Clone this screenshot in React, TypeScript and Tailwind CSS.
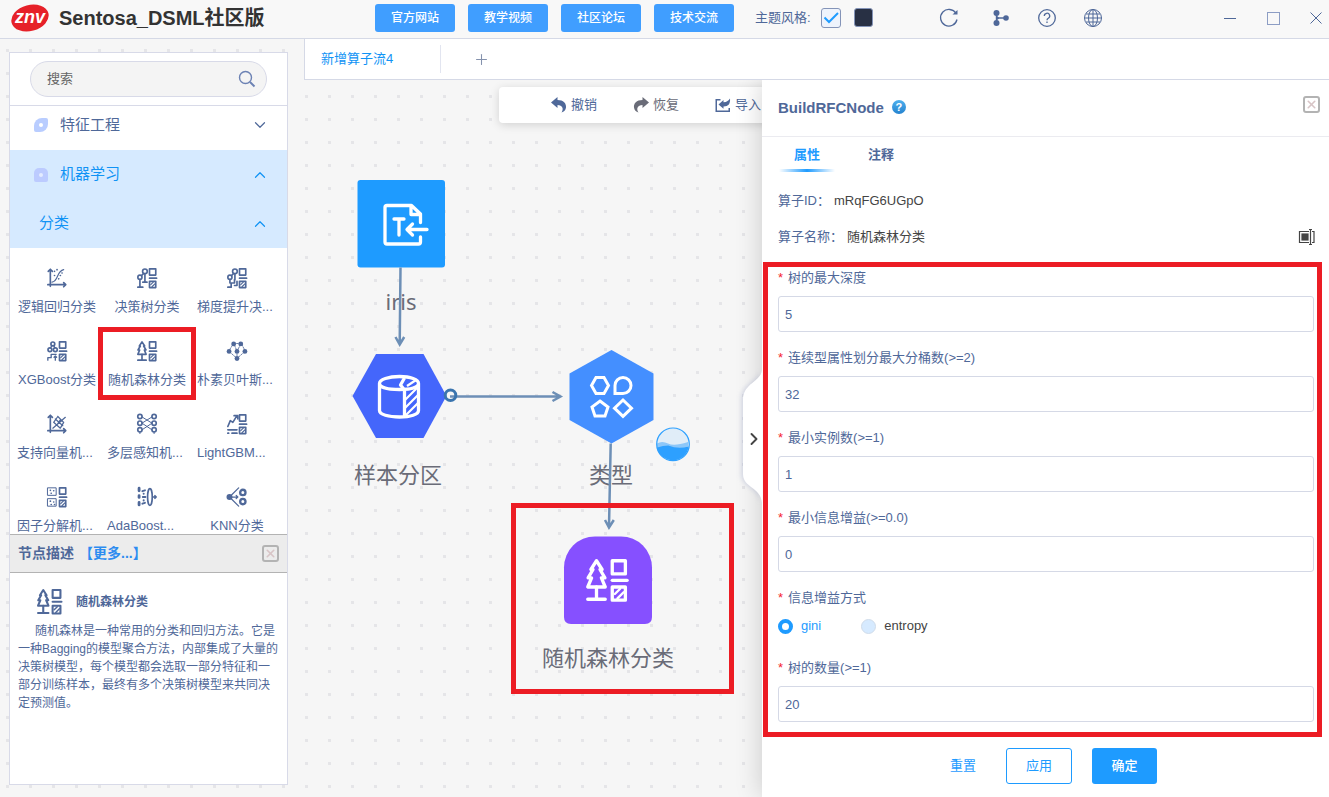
import { useState } from 'react';
import type { ReactNode } from 'react';
import { ChevronDown, ChevronRight, ChevronUp, Plus, X } from 'lucide-react';

const LINKS = ['官方网站', '教学视频', '社区论坛', '技术交流'];

// square + bar + hatched square, shared by most classifier icons
const Leaf = () => (
  <>
    <rect x="15" y="1" width="7.500" height="7.500" />
    <path d="M15 12.200h8.500" />
    <rect x="15" y="16" width="7.500" height="7.500" />
    <path d="M16.500 20l3-3M18 22.500l3.500-3.500" strokeWidth="1.4" />
  </>
);

const Forest = () => (
  <>
    <path d="M6 1L2.800 6H4L1.200 10.800H3.200L1 16H11L8.800 10.800H10.800L8 6H9.200Z" />
    <path d="M6 16v7M1 23h10" />
    <Leaf />
  </>
);

const Axes = () => <path d="M4 2v20M1 20h21M1.500 4L4 1.500L6.500 4M20 17.500L22.500 20L20 22.500" />;

const Icon = ({ children, className }: { children: ReactNode; className: string }) => (
  <svg
    viewBox="0 0 24 24"
    className={`overflow-visible ${className}`}
    fill="none"
    stroke="currentColor"
    strokeWidth="2"
    strokeLinejoin="round"
    strokeLinecap="round"
  >
    {children}
  </svg>
);

const OPERATORS: { name: string; marked?: boolean; icon: ReactNode }[] = [
  {
    name: '逻辑回归分类',
    icon: (
      <>
        <Axes />
        <path d="M6 17C14 16 11 4 20 2" strokeWidth="1.5" />
        <path d="M9 4h.1M9 9h.1M12 2h.1M16 9h.1M14 13h.1M18 6h.1" />
      </>
    ),
  },
  {
    name: '决策树分类',
    icon: (
      <>
        <circle cx="9.500" cy="4" r="2.800" />
        <circle cx="3.500" cy="11" r="2.500" />
        <path d="M3.500 14v9M1 23h6M9.500 7v10M7 17h5M5.500 9l2-2" />
        <Leaf />
      </>
    ),
  },
  {
    name: '梯度提升决...',
    icon: (
      <>
        <circle cx="9.500" cy="4" r="2.800" />
        <circle cx="3.500" cy="11" r="2.500" />
        <path d="M3.500 14v4M1 23h4v-5h4v-4M9.500 7v7M9 21h3v-5M5.500 9l2-2" />
        <Leaf />
      </>
    ),
  },
  {
    name: 'XGBoost分类',
    icon: (
      <>
        <circle cx="7" cy="3.500" r="2.300" />
        <circle cx="3.500" cy="10.500" r="2.300" />
        <circle cx="10" cy="10.500" r="2.300" />
        <path d="M5.800 5.500L4.500 8M8 5.500L9.300 8M1 23v-3h4v-4h6M10 23v-5M8.500 19.500l1.500-1.500l1.500 1.500" strokeWidth="1.600" />
        <Leaf />
      </>
    ),
  },
  { name: '随机森林分类', marked: true, icon: <Forest /> },
  {
    name: '朴素贝叶斯...',
    icon: (
      <>
        <path d="M8 3h9L22 12L12 21L2 12L8 3l4 9L17 3M12 12v9" strokeWidth="1" strokeDasharray="2 1.5" />
        <g fill="currentColor" stroke="none">
          <circle cx="8" cy="3.500" r="2.900" />
          <circle cx="16.500" cy="3.500" r="2.900" />
          <circle cx="2.500" cy="12.500" r="2.900" />
          <circle cx="12" cy="12.500" r="2.900" />
          <circle cx="21.500" cy="12.500" r="2.900" />
          <circle cx="12" cy="21" r="2.900" />
        </g>
      </>
    ),
  },
  {
    name: '支持向量机...',
    icon: (
      <>
        <Axes />
        <path d="M8 10l8 7M10 6l9 8M13 3l7 7M7 17L22 4M8 10l5-7M12 13l4-6M16 17l4-7" strokeWidth="1.500" />
      </>
    ),
  },
  {
    name: '多层感知机...',
    icon: (
      <>
        {[3, 11, 19].map((y) => (
          <g key={y}>
            <circle cx="3.500" cy={y} r="2.600" />
            <circle cx="20.500" cy={y} r="2.600" />
          </g>
        ))}
        <path d="M6 3.500L18 11M6 11L18 3.500M6 11l12 8M6 19l12-8M3.500 21v2.500M20.500 21v2.500" strokeWidth="1.200" />
      </>
    ),
  },
  {
    name: 'LightGBM...',
    icon: (
      <>
        <path d="M1 15L4 8l3 2L12 2M8.500 2H13v4M1 19h11M1 23h1M6 23h6" />
        <Leaf />
      </>
    ),
  },
  {
    name: '因子分解机...',
    icon: (
      <>
        <path d="M1 1h10v9H1zM1 14h10v9H1z" strokeWidth="1.200" />
        <path d="M4 4h.1M8 4.500h.1M5 7.500h.1M4 17h.1M8 18h.1M5 21h.1M9 21h.1" />
        <Leaf />
      </>
    ),
  },
  {
    name: 'AdaBoost...',
    icon: (
      <>
        <path d="M2.500 1.500v3M2.500 10.500v2M2.500 18.500v3" strokeWidth="3.400" />
        <path d="M6.500 5l3-1M7 12h3M6.500 20l3-1M8 8v.1M8 16v.1" strokeWidth="2.400" />
        <ellipse cx="15.500" cy="12" rx="2.800" ry="10" />
        <path d="M19 12h4M21.500 10.500L23 12l-1.500 1.500" />
      </>
    ),
  },
  {
    name: 'KNN分类',
    icon: (
      <>
        <circle cx="3" cy="12" r="2.600" fill="currentColor" />
        <path d="M3 12L14 1M3 12l11 11M5 12h8M11 10l2 2l-2 2" strokeWidth="1.500" />
        <circle cx="19" cy="6.500" r="3.200" strokeWidth="2.800" />
        <circle cx="19" cy="17.500" r="3.200" strokeWidth="2.800" />
      </>
    ),
  },
];

const CloseBox = ({ label }: { label: string }) => (
  <button
    aria-label={label}
    className="flex size-[17px] items-center justify-center rounded-[3px] border-2 border-[#b3b3b3] text-[#d8c4c6]"
  >
    <X size={13} strokeWidth={3} className="shrink-0" />
  </button>
);

const Header = () => {
  const [light, setLight] = useState(true);
  return (
    <header className="flex h-[39px] shrink-0 items-start border-b border-[#d5d9e6] bg-[#f8f8f8] text-[#4f6899]">
      <div className="flex h-[35px] w-[375px] shrink-0 items-center pl-[11px]">
        <svg viewBox="0 0 38 30" className="h-[30px] w-[38px]" role="img" aria-label="znv">
          <ellipse cx="19" cy="15" rx="19" ry="13" fill="#e62129" transform="rotate(-15 19 15)" />
          <text x="19" y="20" textAnchor="middle" fontSize="18" fontWeight="bold" fontStyle="italic" fill="#fff">
            znv
          </text>
        </svg>
        <h1 className="ml-2.5 text-[20px] font-bold text-[#333]">Sentosa_DSML社区版</h1>
      </div>
      <nav className="flex shrink-0 gap-[13px] pt-1">
        {LINKS.map((t) => (
          <a key={t} href="#" className="flex h-7 w-20 items-center justify-center rounded-[3px] bg-[#409eff] text-[12px] font-medium text-white">
            {t}
          </a>
        ))}
      </nav>
      <div className="flex h-[35px] shrink-0 items-center pl-[21px]">
        <label htmlFor="theme" className="text-[13px]">主题风格:</label>
        <span className="relative ml-2.5 size-5">
          <input
            id="theme"
            type="checkbox"
            checked={light}
            onChange={() => setLight(!light)}
            className="block size-5 appearance-none rounded-[3px] border border-[#8494b8] bg-[#eef3fc]"
          />
          {light && (
            <svg viewBox="0 0 20 20" className="pointer-events-none absolute inset-0" fill="none" stroke="#1e9bff" strokeWidth="2">
              <path d="M3.500 9.500L8 14L17 5" />
            </svg>
          )}
        </span>
        <button aria-label="深色主题" className="ml-[13px] size-[19px] rounded-[3px] border border-[#8494b8] bg-[#283044]" />
      </div>
      <div className="flex h-[35px] shrink-0 items-center pl-[66px]">
        <button aria-label="刷新">
          <svg viewBox="0 0 20 20" className="size-5" fill="none" stroke="currentColor" strokeWidth="1.300">
            <path d="M18 11.500A8.300 8.300 0 1 1 17 5.500" />
            <path d="M13.500 6.500h5V2z" fill="currentColor" stroke="none" />
          </svg>
        </button>
        <button aria-label="分支" className="ml-[34px]">
          <svg viewBox="0 0 16 16" className="size-4" fill="currentColor">
            <circle cx="3.500" cy="3" r="3" />
            <circle cx="3.500" cy="13" r="3" />
            <circle cx="13" cy="8" r="2.800" />
            <path d="M2.800 3h1.500v2.200c0 1.800 1.200 2 3 2h5v1.500h-5c-1.800 0-3 .4-3 2V13H2.800z" />
          </svg>
        </button>
        <button aria-label="帮助" className="ml-7">
          <svg viewBox="0 0 20 20" className="size-5" fill="none" stroke="currentColor" strokeWidth="1.300">
            <circle cx="10" cy="10" r="8.300" />
            <path d="M7.300 8a2.700 2.700 0 1 1 4 2.300c-.9.500-1.300 1-1.300 2M10 13.500V15" />
          </svg>
        </button>
        <button aria-label="语言" className="ml-[26px]">
          <svg viewBox="0 0 20 20" className="size-5" fill="none" stroke="currentColor" strokeWidth="1">
            <circle cx="10" cy="10" r="8.500" />
            <ellipse cx="10" cy="10" rx="4.500" ry="8.500" />
            <path d="M10 1.500v17M1.500 10h17M3 6h14M3 14h14" />
          </svg>
        </button>
      </div>
      <div className="ml-auto flex h-9 items-center gap-[29px] pr-[6px]">
        <button aria-label="最小化" className="flex h-3.5 w-3.5 items-center">
          <span className="h-px w-3 bg-current" />
        </button>
        <button aria-label="最大化" className="size-[13px] border border-[#8c9dc4]" />
        <button aria-label="关闭">
          <svg viewBox="0 0 14 14" className="size-3.5" stroke="currentColor" strokeWidth="1">
            <path d="M1.500 1.500l11 11M12.500 1.500l-11 11" />
          </svg>
        </button>
      </div>
    </header>
  );
};

const Sidebar = () => (
  <aside className="mt-[13px] mr-4 mb-3 ml-[9px] flex w-[279px] shrink-0 flex-col border border-[#d8dae8] bg-white text-[#4f6899]">
    <div className="border-b border-[#d8dae8] px-5 py-2">
      <div className="flex h-9 items-center rounded-full border border-[#d8dae8] bg-[#f4f4f4] pr-2.5 pl-4">
        <input
          type="text"
          aria-label="搜索"
          placeholder="搜索"
          className="min-w-0 flex-1 bg-transparent text-[13px] outline-none placeholder:text-[#666]"
        />
        <svg viewBox="0 0 18 18" className="size-[18px] text-[#6c82b4]" fill="none" stroke="currentColor" strokeWidth="1.400">
          <circle cx="7.500" cy="7.500" r="6" />
          <path d="M12 12l4.500 4.500" strokeWidth="2" />
        </svg>
      </div>
    </div>
    <button className="flex h-11 shrink-0 items-center pr-[18px] pb-1.5 pl-6 text-[15px]">
      <span className="flex size-3.5 items-center justify-center rounded-tl-[8px] rounded-tr-[2px] rounded-br-[8px] rounded-bl-[2px] bg-[#b9cdff]">
        <span className="size-1 rounded-full bg-white" />
      </span>
      <span className="ml-3">特征工程</span>
      <ChevronDown size={18} strokeWidth={1.6} className="ml-auto" />
    </button>
    <div className="shrink-0 bg-[#d6eaff] text-[15px] text-[#1093f5]">
      <button className="flex h-[49px] w-full items-center pr-[18px] pl-6">
        <span className="flex size-3.5 items-center justify-center rounded-t-[5px] rounded-b-[2px] bg-[#bccbff]">
          <span className="size-1 rounded-full bg-[#e3ebff]" />
        </span>
        <span className="ml-3">机器学习</span>
        <ChevronUp size={18} strokeWidth={1.6} className="ml-auto" />
      </button>
      <button className="flex h-[49px] w-full items-center pr-[18px] pl-[29px]">
        <span>分类</span>
        <ChevronUp size={18} strokeWidth={1.6} className="ml-auto" />
      </button>
    </div>
    <div className="min-h-0 flex-1 basis-0 overflow-hidden">
      <ul className="grid grid-cols-3 pr-[5px] pl-[2px]">
        {OPERATORS.map((op) => (
          <li key={op.name} className="relative flex h-[73px] flex-col items-center pt-5">
            <Icon className="size-5">{op.icon}</Icon>
            <span className={`mt-[9px] w-20 text-[13px] leading-5 whitespace-nowrap ${op.name.endsWith('...') ? 'text-left' : 'text-center'}`}>
              {op.name}
            </span>
            {op.marked && <span className="absolute -inset-x-1 top-1.5 -bottom-1.5 z-10 border-5 border-[#ec1c24]" />}
          </li>
        ))}
      </ul>
    </div>
    <section className="h-[250px] shrink-0">
      <div className="flex h-[39px] items-center border-y border-[#b3b3b3] bg-[#ececec] px-2 text-[14px] font-bold">
        <h2>节点描述</h2>
        <a href="#" className="ml-[5px] text-[#2d8cf0]">【更多...】</a>
        <span className="ml-auto">
          <CloseBox label="关闭描述" />
        </span>
      </div>
      <div className="px-2 pt-4 text-[12px]">
        <div className="flex h-[33px] items-start pl-[19px]">
          <Icon className="size-[25px]">
            <Forest />
          </Icon>
          <h3 className="ml-3.5 leading-[26px] font-bold">随机森林分类</h3>
        </div>
        <p className="indent-[17px] leading-[18px]">
          随机森林是一种常用的分类和回归方法。它是一种Bagging的模型聚合方法，内部集成了大量的决策树模型，每个模型都会选取一部分特征和一部分训练样本，最终有多个决策树模型来共同决定预测值。
        </p>
      </div>
    </section>
  </aside>
);

const Toolbar = () => (
  <div className="mt-[7px] ml-[195px] flex h-9 w-[560px] items-center gap-9 rounded-[4px] bg-white pl-[52px] text-[13px] text-[#4f6899] shadow-[0_2px_10px_rgba(0,0,0,0.15)]">
    <button className="flex shrink-0 items-center gap-1">
      <svg viewBox="0 0 16 16" className="size-4" fill="currentColor">
        <path d="M0 5.500L6.500 0v3C12.500 3 15.500 6.500 15 10.500C14.700 13 13 15 10.500 15.500C13 12 11.500 8 6.500 8v3z" />
      </svg>
      撤销
    </button>
    <button className="flex shrink-0 items-center gap-1 text-[#6a6c78]">
      <svg viewBox="0 0 16 16" className="size-4" fill="currentColor">
        <path d="M16 5.500L9.500 0v3C3.500 3 .5 6.500 1 10.500C1.300 13 3 15 5.500 15.500C3 12 4.500 8 9.500 8v3z" />
      </svg>
      恢复
    </button>
    <button className="flex shrink-0 items-center gap-1">
      <svg viewBox="0 0 16 16" className="size-4" fill="currentColor">
        <path d="M.5 2h5v1.500H2v10h11.500V11H15v4H.5z" />
        <path d="M3.500 7.500L8.500 3v2.200C12 5.200 13.500 3.500 15 1.500C15.500 6.500 13.500 9.500 8.500 9.500v2.200z" />
      </svg>
      导入
    </button>
  </div>
);

const NodeLabel = ({ className, children }: { className: string; children: ReactNode }) => (
  <span className={`absolute w-40 text-center text-[22px] leading-8 text-[#6a6c78] ${className}`}>{children}</span>
);

const Canvas = () => (
  <div className="relative min-w-0 flex-1 overflow-hidden">
    <Toolbar />
    <NodeLabel className="top-[205px] left-[17px] font-['Noto_Sans']">iris</NodeLabel>
    <NodeLabel className="top-[380px] left-[14px]">样本分区</NodeLabel>
    <NodeLabel className="top-[380px] left-[227px]">类型</NodeLabel>
    <NodeLabel className="top-[563px] left-[224px]">随机森林分类</NodeLabel>
    {/* nodes and edges, 458 x 640 canvas units */}
    <svg viewBox="0 0 458 640" className="absolute top-0 left-0 h-[640px] w-[458px]" fill="none">
      <rect x="53.500" y="100" width="87.500" height="87.500" rx="3" fill="#1e9bff" />
      <g stroke="#fff" strokeWidth="3.300" strokeLinecap="round" strokeLinejoin="round">
        <path d="M116.500 142.500v-8.500L107.500 125.500H83q-2 0-2 2v34.500q0 2 2 2H114.500q2 0 2-2v-5M107 126v8.500h8.500" />
        <path d="M90 139h10M95 139v16M123 149.500h-19M108.500 144l-5.500 5.500l5.500 5.500" />
      </g>
      <path d="M48.500 316L72 274h47.500L142.500 316L119.500 358H72z" fill="#4466fb" />
      <g stroke="#fff" strokeWidth="3.300" strokeLinejoin="round">
        <path d="M75.500 303.500c0-4 9-7 20-7s19 3 19 7c0 4-8 6-19 6s-20-2-20-6v27c0 4 9 6.500 20 6.500s19-2.500 19-6.500v-27" />
        <path d="M100.500 310v26M100.500 310l-4-5l4-7" />
        <path d="M101 320l12-12M101 328l13-13M101 336l13-13M103 306l9-6" strokeWidth="2.200" />
      </g>
      <path d="M307.500 270l42 23.500v46.500l-42 23.500l-42-23.500V293.500z" fill="#448fff" />
      <g stroke="#fff" strokeWidth="3">
        <path d="M292 297.500h8l4.500 8l-4.500 8h-8l-4.500-8z" />
        <path d="M311 313.500v-8a8 8 0 1 1 8 8z" />
        <path d="M296 321l8 6l-3 9h-10l-3-9z" />
        <path d="M319 320l8.500 8.200l-8.500 8.200l-8.500-8.200z" />
      </g>
      <path d="M260 487.500a31 31 0 0 1 31-31h26a31 31 0 0 1 31 31V537q0 7-7 7h-74q-7 0-7-7z" fill="#8650ff" />
      <g transform="translate(282 479) scale(1.750)" stroke="#fff" strokeWidth="1.900" strokeLinejoin="round" strokeLinecap="round">
        <Forest />
      </g>
      <g stroke="#6d8fb6" strokeWidth="2.500">
        <path d="M96.500 187.500L95.700 264M91.500 257l4.200 7.500l4.500-7.500" />
        <path d="M146 316.500h110M248.500 312l8 4.500l-8 4.500" />
        <path d="M306.700 363.500L305 447M301 440l4 7.500l4.800-7.500" />
      </g>
      <circle cx="146.500" cy="315.300" r="5.300" stroke="#3a74ae" strokeWidth="3" />
      <circle cx="369" cy="364.300" r="16" fill="#e0edf8" />
      <path d="M353 363.500q5-3 11 0t20-1.500a16 16 0 0 1-31 7z" fill="#8cc7f9" />
      <path d="M353.200 367.500q6-2 11-2q10 4 20.500 1a16 16 0 0 1-31.500 1z" fill="#2da0ff" />
      <circle cx="369" cy="364.300" r="16.300" stroke="#2da0ff" strokeWidth="1.200" />
    </svg>
    <span className="absolute top-[423px] left-[207px] h-[191px] w-[223px] border-5 border-[#ec1c24]" />
  </div>
);

const Field = ({ id, label, value }: { id: string; label: string; value: string }) => {
  const [text, setText] = useState(value);
  return (
    <div className="flex flex-col gap-2">
      <label htmlFor={id} className="leading-5">
        <span className="mr-[5px] text-[#f5222d]">*</span>
        {label}
      </label>
      <input
        id={id}
        type="text"
        value={text}
        onChange={(e) => setText(e.target.value)}
        className="h-9 w-full rounded-[3px] border border-[#d5d9e6] bg-white px-1.5 outline-none"
      />
    </div>
  );
};

const PropertyPanel = () => {
  const [impurity, setImpurity] = useState('gini');
  return (
    <section className="relative flex w-[567px] shrink-0 flex-col bg-white text-[13px] text-[#4f6899] shadow-[-2px_0_24px_rgba(0,0,0,0.16)]">
      {/* collapse handle */}
      <button aria-label="收起" className="absolute top-[290px] -left-5 h-[134px] w-5">
        <svg viewBox="0 0 20 134" className="h-[134px] w-5 overflow-visible">
          <path
            d="M20 0C19 12 1 13 1 30V104C1 118 19 117 20 133"
            fill="#fff"
            className="drop-shadow-[-2px_0_2px_rgba(120,130,180,0.25)]"
          />
        </svg>
        <ChevronRight size={20} strokeWidth={2.3} className="absolute top-[59px] left-[2px] text-[#444]" />
      </button>
      <div className="flex h-[57px] shrink-0 items-start border-b border-[#ebebf0] pr-[9px] pl-4">
        <h2 className="pt-4 text-[15px] leading-6 font-bold">BuildRFCNode</h2>
        <button
          aria-label="帮助"
          className="mt-5 ml-2 size-3.5 rounded-full bg-linear-to-b from-[#4db0ee] to-[#2583cf] text-[11px] leading-3.5 font-bold text-white"
        >
          ?
        </button>
        <span className="mt-4 ml-auto">
          <CloseBox label="关闭属性" />
        </span>
      </div>
      <div role="tablist" className="flex h-[35px] shrink-0 gap-[18px] px-[17px] font-bold">
        <button role="tab" aria-selected="true" className="relative w-14 text-[#1e9bff]">
          属性
          <span className="absolute inset-x-0 bottom-0 h-[3px] bg-linear-to-r from-transparent via-[#1e9bff] to-transparent" />
        </button>
        <button role="tab" aria-selected="false" className="w-14">注释</button>
      </div>
      <div className="flex shrink-0 flex-col gap-4 pt-[19px] pr-[13px] pb-4 pl-4 leading-5">
        <p>
          算子ID：<span className="ml-1 text-[#444]">mRqFG6UGpO</span>
        </p>
        <div className="flex items-center">
          <span>算子名称：</span>
          <span className="ml-1 text-[#444]">随机森林分类</span>
          <button aria-label="重命名" className="ml-auto text-[#444]">
            <svg viewBox="0 0 18 16" className="h-4 w-[18px]" fill="none" stroke="currentColor" strokeWidth="1.200">
              <path d="M11 2.500H1.500v11H11M14 2.500h2v11h-2M12.500.500v15M11 .500h3M11 15.500h3" />
              <rect x="4" y="5" width="6" height="6" fill="currentColor" />
            </svg>
          </button>
        </div>
      </div>
      <form className="-mt-px mr-[7px] ml-px flex shrink-0 flex-col border-5 border-[#ec1c24] pt-px pr-[3px] pb-2.5 pl-2.5" onSubmit={(e) => e.preventDefault()}>
        <div className="flex flex-col gap-4">
          <Field id="maxDepth" label="树的最大深度" value="5" />
          <Field id="maxBins" label="连续型属性划分最大分桶数(>=2)" value="32" />
          <Field id="minInstances" label="最小实例数(>=1)" value="1" />
          <Field id="minInfoGain" label="最小信息增益(>=0.0)" value="0" />
          <fieldset>
            <legend className="leading-5">
              <span className="mr-[5px] text-[#f5222d]">*</span>信息增益方式
            </legend>
            <div className="flex gap-10 pt-2 pb-[6px]">
              {['gini', 'entropy'].map((v) => (
                <label key={v} className="flex h-5 items-center gap-2 text-[#444] has-checked:text-[#1e9bff]">
                  <input
                    type="radio"
                    name="impurity"
                    checked={impurity === v}
                    onChange={() => setImpurity(v)}
                    className="size-[15px] appearance-none rounded-full border border-[#d0dcea] bg-[#d6eaff] checked:border-4 checked:border-[#1e9bff] checked:bg-white"
                  />
                  {v}
                </label>
              ))}
            </div>
          </fieldset>
          <Field id="numTrees" label="树的数量(>=1)" value="20" />
        </div>
      </form>
      <div className="flex shrink-0 justify-center gap-5 pt-[11px] pl-[6px]">
        <button className="-mr-2.5 w-[66px] text-[#1e9bff]">重置</button>
        <button className="h-9 w-[66px] rounded-[3px] border border-[#1e9bff] text-[#1e9bff]">应用</button>
        <button className="mr-[10px] h-9 w-[65px] rounded-[3px] bg-[#1e9bff] font-medium text-white">确定</button>
      </div>
    </section>
  );
};

export default function App() {
  return (
    <div className="flex h-screen flex-col overflow-hidden bg-[#f6f6f6] bg-[radial-gradient(circle_at_center,#e5e5e8_1.4px,transparent_1.8px)] bg-size-[23px_23px] bg-position-[19px_16px] font-['Liberation_Sans','Noto_Sans_CJK_SC',sans-serif]">
      <Header />
      <div className="flex min-h-0 flex-1">
        <Sidebar />
        <main className="flex min-w-0 flex-1 flex-col">
          <div className="relative z-10 flex h-[41px] shrink-0 items-center border-b border-l border-[#d5d9e6] bg-white text-[13px]">
            <button className="h-7 w-[136px] border-r border-[#e2e5f0] pl-4 text-left text-[#1093f5]">新增算子流4</button>
            <button aria-label="新增标签" className="ml-8 text-[#8592ad]">
              <Plus size={17} strokeWidth={1.5} />
            </button>
          </div>
          <div className="flex min-h-0 flex-1">
            <Canvas />
            <PropertyPanel />
          </div>
        </main>
      </div>
    </div>
  );
}
